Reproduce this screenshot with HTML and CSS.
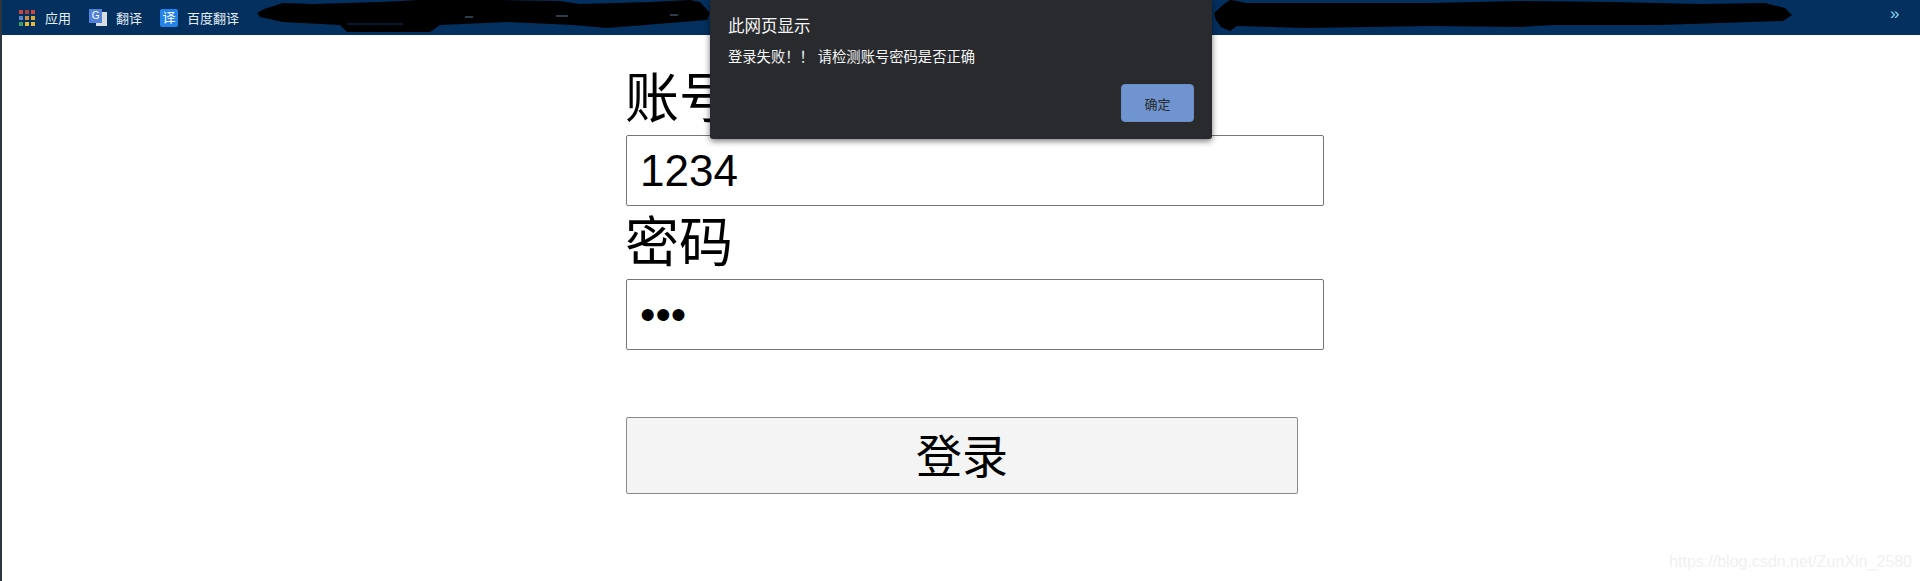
FILE: index.html
```html
<!DOCTYPE html>
<html lang="zh-CN">
<head>
    <meta charset="UTF-8">
    <title>登录</title>
    <link rel="stylesheet" href="styles.css">
</head>
<body>
    <div class="bookmarks">
        <div class="bookmark apps">
            <svg class="bookmark-icon" width="16" height="16" viewBox="0 0 16 16">
                <rect x="0" y="0" width="4" height="4" fill="#c8473f"/>
                <rect x="6" y="0" width="4" height="4" fill="#a8403c"/>
                <rect x="12" y="0" width="4" height="4" fill="#c8473f"/>
                <rect x="0" y="6" width="4" height="4" fill="#5a86c8"/>
                <rect x="6" y="6" width="4" height="4" fill="#d08f3a"/>
                <rect x="12" y="6" width="4" height="4" fill="#dcaa35"/>
                <rect x="0" y="12" width="4" height="4" fill="#3f9a64"/>
                <rect x="6" y="12" width="4" height="4" fill="#e3b93c"/>
                <rect x="12" y="12" width="4" height="4" fill="#e3b93c"/>
            </svg>
            <span>应用</span>
        </div>
        <div class="bookmark">
            <div class="gt-icon">
                <span class="gt-back"></span>
                <span class="gt-front">G</span>
            </div>
            <span>翻译</span>
        </div>
        <div class="bookmark">
            <span class="bd-icon">译</span>
            <span>百度翻译</span>
        </div>
        <span class="more">»</span>
    </div>

    <!-- blacked out bookmarks -->
    <svg class="scribble" width="1920" height="35" viewBox="0 0 1920 35">
        <path fill="#000" d="M257 13 L264 9 L283 3 L313 4 L380 2 L420 0 L500 0 L560 1 L580 4 L650 2 L690 0 L700 2 L710 13 L707 20 L657 24 L607 28 L573 25 L507 22 L440 25 L430 32 L347 32 L340 25 L283 22 L260 17 Z"/>
        <path fill="#000" d="M1214 13 L1224 4 L1230 0 L1237 1 L1246 3 L1340 3 L1430 3 L1521 1 L1613 2 L1700 4 L1765 3 L1785 8 L1792 15 L1783 21 L1720 23 L1659 25 L1553 25 L1521 27 L1430 26 L1306 28 L1237 26 L1230 31 L1221 27 L1216 20 Z"/>
        <path class="scribble-slit" d="M347 24 h56"/>
        <path class="scribble-mark" d="M465 17 h8 M556 16 h12 M670 15 h8"/>
    </svg>

    <div class="page">
        <form class="login-form">
            <label class="form-label" for="username">账号</label>
            <input class="form-input" type="text" id="username" value="1234">
            <label class="form-label" for="password">密码</label>
            <input class="form-input" type="password" id="password" value="123">
            <button class="login-btn" type="button">登录</button>
        </form>
    </div>

    <div class="dialog">
        <p class="dialog-title">此网页显示</p>
        <p class="dialog-msg">登录失败！！ 请检测账号密码是否正确</p>
        <div class="dialog-actions">
            <button class="dialog-btn" type="button">确定</button>
        </div>
    </div>

    <span class="watermark">https://blog.csdn.net/ZunXin_2580</span>
</body>
</html>
```

FILE: styles.css
```css
* {
    margin: 0;
    padding: 0;
    box-sizing: border-box;
    font-family: "Liberation Sans", "Noto Sans CJK SC", sans-serif;
}

body {
    position: relative;
    height: 581px;
    overflow: hidden;
    background-color: #fff;
    border-left: 2px solid #2c3540;
}

.bookmarks {
    display: flex;
    align-items: center;
    height: 35px;
    padding-left: 17px;
    background-color: #03305f;
    color: #e3edf5;
    font-size: 13px;
}

.bookmark {
    display: flex;
    align-items: center;
    gap: 9px;
    margin-right: 18px;
}

.apps {
    gap: 10px;
}

.bookmark-icon {
    display: block;
}

.gt-icon {
    position: relative;
    width: 18px;
    height: 17px;
}

.gt-back {
    position: absolute;
    right: 0;
    top: 3px;
    width: 11px;
    height: 14px;
    background-color: #d9dde2;
}

.gt-front {
    position: absolute;
    left: 0;
    top: 0;
    width: 13px;
    height: 14px;
    background-color: #4f82d8;
    color: #fff;
    font-size: 10px;
    line-height: 14px;
    text-align: center;
}

.bd-icon {
    width: 18px;
    height: 18px;
    border-radius: 2px;
    background-color: #2383e6;
    color: #fff;
    font-size: 13px;
    line-height: 18px;
    text-align: center;
}

.more {
    position: absolute;
    left: 1888px;
    top: 4px;
    color: #8fd3ee;
    font-size: 17px;
}

.scribble {
    position: absolute;
    left: -2px;
    top: 0;
}

.scribble-mark {
    stroke: #5b7896;
    stroke-width: 1;
}

.scribble-slit {
    stroke: #03305f;
    stroke-width: 1;
}

.page {
    padding: 27px 0 0 624px;
}

.login-form {
    display: flex;
    flex-direction: column;
    align-items: flex-start;
}

.form-label {
    margin-left: -1px;
    padding-top: 2px;
    font-size: 54px;
    line-height: 71px;
    color: #000;
}

.form-input {
    width: 698px;
    height: 71px;
    padding: 0 13px;
    border: 1px solid #767676;
    border-radius: 2px;
    font-size: 44px;
    color: #000;
}

.login-btn {
    width: 672px;
    height: 77px;
    margin-top: 67px;
    padding-bottom: 5px;
    background-color: #f4f4f4;
    border: 1px solid #8a8a8a;
    border-radius: 2px;
    font-size: 46px;
    color: #000;
}

.dialog {
    position: absolute;
    left: 708px;
    top: 0;
    width: 502px;
    height: 139px;
    padding: 16px 18px 17px;
    background-color: #292a2d;
    border-radius: 0 0 3px 3px;
    box-shadow: 0 2px 6px rgba(0, 0, 0, 0.55);
    color: #f4f5f6;
}

.dialog-title {
    font-size: 16.5px;
    line-height: 20px;
}

.dialog-msg {
    margin-top: 11px;
    font-size: 14.3px;
    line-height: 20px;
}

.dialog-actions {
    display: flex;
    justify-content: flex-end;
    margin-top: 17px;
}

.dialog-btn {
    width: 73px;
    height: 38px;
    background-color: #7094d0;
    border: 1px solid #6a8ec9;
    border-radius: 4px;
    font-size: 13px;
    color: #292a2d;
}

.watermark {
    position: absolute;
    right: 8px;
    top: 553px;
    font-size: 16px;
    color: #f0f0f0;
}
```
